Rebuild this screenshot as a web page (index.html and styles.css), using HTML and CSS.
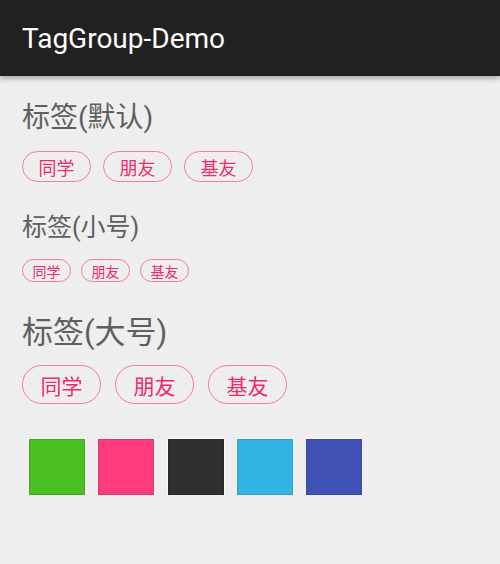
FILE: index.html
```html
<!DOCTYPE html>
<html>
<head>
<meta charset="utf-8">
<link rel="stylesheet" href="styles.css">
</head>
<body>
<header class="appbar">TagGroup-Demo</header>
<main class="content">
  <h2 class="heading heading-default">标签(默认)</h2>
  <div class="tags tags-default">
    <span class="tag">同学</span><span class="tag">朋友</span><span class="tag">基友</span>
  </div>
  <h2 class="heading heading-small">标签(小号)</h2>
  <div class="tags tags-small">
    <span class="tag">同学</span><span class="tag">朋友</span><span class="tag">基友</span>
  </div>
  <h2 class="heading heading-large">标签(大号)</h2>
  <div class="tags tags-large">
    <span class="tag">同学</span><span class="tag">朋友</span><span class="tag">基友</span>
  </div>
  <div class="swatches">
    <div class="swatch green"></div>
    <div class="swatch pink"></div>
    <div class="swatch dark"></div>
    <div class="swatch cyan"></div>
    <div class="swatch indigo"></div>
  </div>
</main>
</body>
</html>
```
FILE: styles.css
```css
html, body {
  margin: 0;
  padding: 0;
  background: #eeeeee;
  font-family: Roboto, "Noto Sans CJK SC", sans-serif;
}
.appbar {
  height: 76px;
  background: #212121;
  color: #ffffff;
  font-size: 28px;
  line-height: 78px;
  padding-left: 22px;
  box-shadow: 0 2px 6px rgba(0, 0, 0, 0.35);
  position: relative;
}
.content {
  padding-left: 22px;
  padding-top: 27px;
}
.heading {
  margin: 0;
  font-weight: normal;
  color: #5f5f5f;
}
.heading-default {
  font-size: 28px;
  line-height: 30px;
  height: 30px;
}
.heading-small {
  font-size: 25px;
  line-height: 30px;
  height: 30px;
  margin-top: 31px;
}
.heading-large {
  font-size: 31px;
  line-height: 36px;
  height: 36px;
  margin-top: 33px;
}
.tags {
  display: flex;
}
.tag {
  display: inline-flex;
  align-items: center;
  justify-content: center;
  box-sizing: border-box;
  border: 1px solid #f47ca2;
  border-radius: 999px;
  color: #ee2a69;
  white-space: nowrap;
}
.tags-default {
  margin-top: 18px;
  gap: 12px;
}
.tags-default .tag {
  height: 31px;
  font-size: 18px;
  padding: 0 15.5px;
}
.tags-small {
  margin-top: 16px;
  gap: 10px;
}
.tags-small .tag {
  height: 23px;
  font-size: 14px;
  padding: 0 9.5px;
}
.tags-large {
  margin-top: 14px;
  gap: 14px;
}
.tags-large .tag {
  height: 39px;
  font-size: 21px;
  padding: 0 17.5px;
}
.swatches {
  display: flex;
  gap: 13.3px;
  margin-top: 35px;
  padding-left: 7px;
}
.swatch {
  width: 56px;
  height: 56px;
  box-sizing: border-box;
  border: 1px solid rgba(0, 0, 0, 0.12);
  outline: 1px solid rgba(255, 255, 255, 0.6);
}
.green { background: #4ac022; }
.pink { background: #ff3c7b; }
.dark { background: #2f2f2f; }
.cyan { background: #33b4e4; }
.indigo { background: #3f51b5; }
```
